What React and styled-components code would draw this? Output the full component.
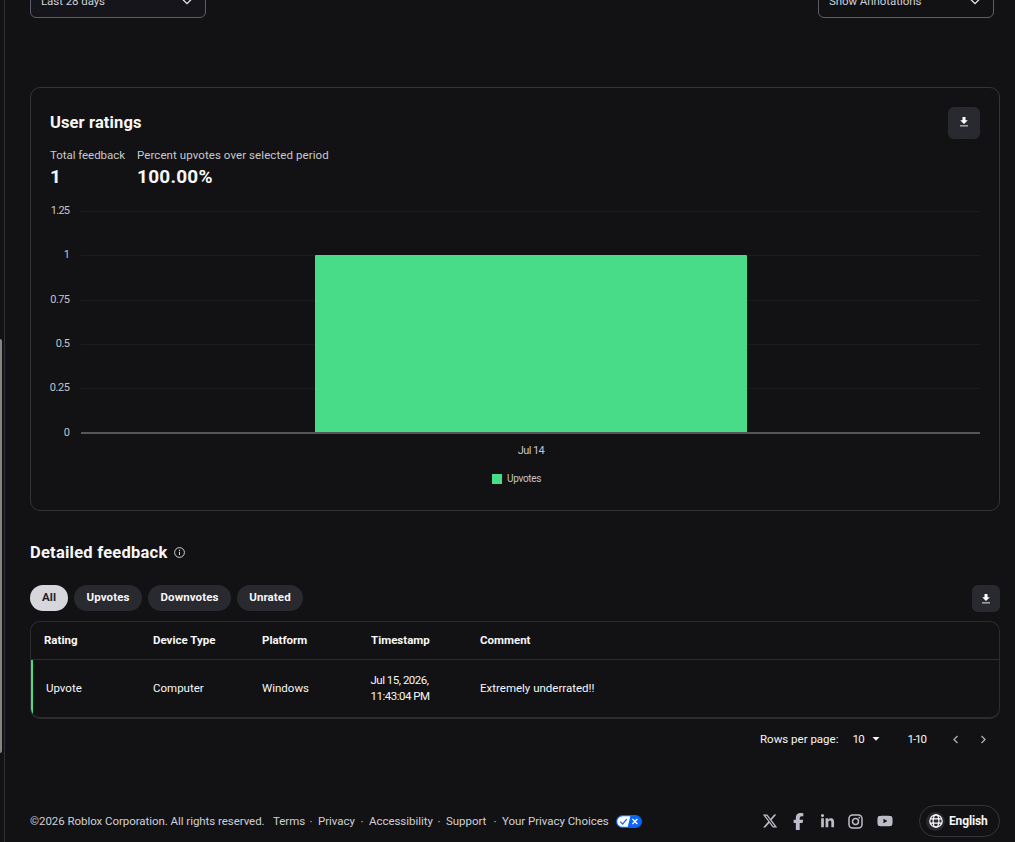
import styled, { createGlobalStyle } from "styled-components";
import { FaXTwitter, FaFacebookF, FaLinkedinIn, FaYoutube } from "react-icons/fa6";

const GlobalStyle = createGlobalStyle`
  * {
    box-sizing: border-box;
  }
  body {
    margin: 0;
    background: #121214;
    color: #f7f7f8;
    font-family: Roboto, "Liberation Sans", sans-serif;
    font-size: 11.5px;
    overflow: hidden;
  }
`;

const Page = styled.div`
  display: flex;
  height: 842px;
  overflow: hidden;
`;

const Rail = styled.div`
  width: 5px;
  flex: none;
  padding-top: 339px;
  border-right: 1px solid #303036;
`;

const Thumb = styled.div`
  width: 2px;
  height: 414px;
  border-radius: 0 2px 2px 0;
  background: #858582;
`;

const Main = styled.main`
  width: 970px;
  margin-left: 25px;
  display: flex;
  flex-direction: column;
`;

const Filters = styled.div`
  display: flex;
  justify-content: space-between;
  align-items: flex-end;
  height: 18px;
  padding-right: 6px;
`;

const Select = styled.button`
  display: flex;
  flex: none;
  align-items: center;
  justify-content: space-between;
  width: 176px;
  height: 34px;
  padding: 0 11px 0 10px;
  border: 1px solid #5d5e69;
  border-radius: 6px;
  background: ${(props) => props.$background || "transparent"};
  color: #d0d1d8;
  font: inherit;
  letter-spacing: -0.07px;
`;

const Card = styled.section`
  height: 424px;
  margin-top: 69px;
  padding: 19px 19px 0;
  border: 1px solid #34353a;
  border-radius: 10px;
`;

const CardHeader = styled.div`
  display: flex;
  justify-content: space-between;
  height: 37px;
`;

const Title = styled.h2`
  margin: 0;
  font-size: 16.5px;
  font-weight: 700;
  line-height: 31px;
  letter-spacing: ${(props) => props.$spacing || "0"};
`;

const DownloadButton = styled.button`
  display: flex;
  align-items: center;
  justify-content: center;
  width: ${(props) => props.$width}px;
  height: ${(props) => props.$height}px;
  padding: 0 0 ${(props) => props.$lift || 0}px;
  border: 0;
  border-radius: 6px;
  background: #292930;
`;

const Stats = styled.div`
  display: flex;
  height: 58px;
`;

const Stat = styled.div`
  width: ${(props) => props.$width};
  white-space: nowrap;
`;

const StatLabel = styled.div`
  color: #c8c9ce;
  line-height: 22px;
  letter-spacing: ${(props) => props.$spacing || "0"};
`;

const StatValue = styled.div`
  font-size: 19px;
  font-weight: 700;
  line-height: 22px;
  letter-spacing: 0.25px;
`;

const Chart = styled.svg`
  display: block;
  overflow: visible;
  font-size: 11px;
  fill: #c3c4ca;
`;

const FeedbackHeader = styled.div`
  display: flex;
  align-items: center;
  gap: 6px;
  margin-top: 26px;
`;

const Toolbar = styled.div`
  display: flex;
  justify-content: space-between;
  margin-top: 17px;
  height: 36px;
`;

const Chips = styled.div`
  display: flex;
  gap: 6px;
`;

const Chip = styled.button`
  width: ${(props) => props.$width}px;
  height: 26px;
  padding: 0 0 2px;
  border: 0;
  border-radius: 13px;
  background: ${(props) => (props.$active ? "#d5d7dd" : "#292930")};
  color: ${(props) => (props.$active ? "#202227" : "#f7f7f8")};
  font: inherit;
  font-weight: 700;
  letter-spacing: 0.1px;
`;

const Table = styled.div`
  height: 98px;
  border: 1px solid #2b2b31;
  border-bottom-width: 2px;
  border-radius: 10px;
  overflow: hidden;
`;

const Row = styled.div`
  display: grid;
  grid-template-columns: repeat(4, 109px) 1fr;
  align-items: center;
  height: 57px;
  padding: 0 0 2px 13px;
  line-height: 16px;
  box-shadow: inset 2px 0 0 #46db87;

  > :first-child {
    padding-left: 2px;
  }
`;

const HeadRow = styled(Row)`
  height: 38px;
  padding-bottom: 1px;
  border-bottom: 1px solid #2b2b31;
  box-shadow: none;
  font-weight: 700;

  > :first-child {
    padding-left: 0;
  }
`;

const Timestamp = styled.span`
  margin-left: -0.5px;
  letter-spacing: -0.5px;
`;

const Pagination = styled.div`
  display: flex;
  align-items: center;
  height: 42px;
  padding: 0 0 2px 730px;
`;

const PageSize = styled.div`
  display: flex;
  align-items: center;
  gap: 8px;
  width: 55px;
  margin-left: 14px;
  letter-spacing: -0.7px;
`;

const Range = styled.div`
  width: 45px;
  letter-spacing: -1px;
`;

const Arrows = styled.div`
  display: flex;
  gap: 21px;
`;

const Footer = styled.footer`
  display: flex;
  align-items: center;
  height: 32px;
  margin-top: 44px;
  color: #cfd0d7;
`;

const Copyright = styled.span`
  width: 243px;
  white-space: nowrap;
  letter-spacing: -0.05px;
`;

const Links = styled.nav`
  display: flex;
  flex: 1;
  align-items: center;
  white-space: nowrap;
`;

const FooterLink = styled.span`
  flex: none;
  width: ${(props) => props.$width}px;
  letter-spacing: -0.04px;
`;

const Dot = styled.span`
  flex: none;
  width: 14px;
  padding-top: 1px;
  text-align: center;
`;

const Socials = styled.div`
  display: flex;
  align-items: center;
  color: #bcbdc8;
`;

const Social = styled.span`
  display: flex;
  justify-content: center;
  width: 28.7px;
`;

const Language = styled.button`
  display: flex;
  align-items: center;
  gap: 4px;
  width: 81px;
  height: 32px;
  margin-left: 20px;
  padding: 0 0 0 6px;
  border: 1px solid #34353c;
  border-radius: 16px;
  background: transparent;
  color: #f7f7f8;
  font: inherit;
  font-size: 12px;
  font-weight: 700;
  letter-spacing: -0.15px;
`;

const GlobeBadge = styled.span`
  display: flex;
  align-items: center;
  justify-content: center;
  width: 19px;
  height: 19px;
  border-radius: 50%;
  background: #292930;
`;

const Chevron = () => (
  <svg width="14" height="8" viewBox="0 0 14 8">
    <path d="M1.500 1.200 7 6.600l5.500-5.400" fill="none" stroke="#e6e7ec" strokeWidth="1.300" />
  </svg>
);

const DownloadIcon = () => (
  <svg width="10" height="12" viewBox="0 0 10 12">
    <path d="M3.500 1h3v3.200h2.300L5 8.100 1.200 4.200h2.300z" fill="#fff" />
    <path d="M1 9.200h8v1.300H1z" fill="#b9bac2" />
  </svg>
);

const InfoIcon = () => (
  <svg width="11" height="11" viewBox="0 0 11 11">
    <circle cx="5.500" cy="5.500" r="4.900" fill="none" stroke="#cfd0d7" />
    <path d="M5 4.700h1v3.400H5zM5 2.700h1v1.200H5z" fill="#cfd0d7" />
  </svg>
);

const PrivacyIcon = () => (
  <svg width="26" height="13" viewBox="0 0 26 13">
    <rect width="26" height="13" rx="6.500" fill="#0b66f5" />
    <path d="M6.500 1.200h7.800L11.800 11.800H6.500a5.300 5.300 0 0 1 0-10.600z" fill="#fff" />
    <path d="m4.300 6.600 2.300 2.500 4.200-5" fill="none" stroke="#0b66f5" strokeWidth="1.300" />
    <path d="m16.400 4 5 5m0-5-5 5" stroke="#fff" strokeWidth="1.300" />
  </svg>
);

const InstagramIcon = () => (
  <svg width="15" height="15" viewBox="0 0 15 15" fill="none" stroke="currentColor" strokeWidth="1.500">
    <rect x="1" y="1" width="13" height="13" rx="3.500" />
    <circle cx="7.500" cy="7.500" r="3" />
    <circle cx="11.300" cy="3.700" r="0.900" fill="currentColor" stroke="none" />
  </svg>
);

const GlobeIcon = () => (
  <svg width="14" height="14" viewBox="0 0 14 14" fill="none" stroke="#fff" strokeWidth="1.200">
    <circle cx="7" cy="7" r="6.200" />
    <ellipse cx="7" cy="7" rx="2.900" ry="6.200" />
    <path d="M1.200 4.900h11.600M1.200 9.100h11.600" />
  </svg>
);

const ArrowIcon = ({ d }) => (
  <svg width="7" height="9" viewBox="0 0 7 9">
    <path d={d} fill="none" stroke="#a9aab0" strokeWidth="1.400" />
  </svg>
);

const ticks = [
  { label: "1.25", y: 9, spacing: -0.75 },
  { label: "1", y: 53.3 },
  { label: "0.75", y: 98, spacing: -0.6 },
  { label: "0.5", y: 142, spacing: -0.5 },
  { label: "0.25", y: 186, spacing: -0.4 },
  { label: "0", y: 231 },
];

const filters = [
  { label: "All", width: 38 },
  { label: "Upvotes", width: 68 },
  { label: "Downvotes", width: 83 },
  { label: "Unrated", width: 66 },
];

const columns = ["Rating", "Device Type", "Platform", "Timestamp", "Comment"];

const RatingsChart = () => (
  <Chart width="930" height="290">
    {ticks.map((tick) => (
      <g key={tick.label}>
        {tick.label !== "0" && (
          <line
            x1="31"
            x2="930"
            y1={Math.round(tick.y) + 0.5}
            y2={Math.round(tick.y) + 0.5}
            stroke="#1c1c1f"
          />
        )}
        <text
          x={20 + (tick.spacing || 0)}
          y={tick.y + 3}
          textAnchor="end"
          letterSpacing={tick.spacing || 0}
        >
          {tick.label}
        </text>
      </g>
    ))}
    <rect x="265" y="53" width="432" height="178" rx="1" fill="#48dc89" />
    <rect x="31" y="230" width="899" height="2" fill="#55565b" />
    <text x="481" y="252" textAnchor="middle" letterSpacing="-0.6">
      Jul 14
    </text>
    <rect x="442" y="272" width="10" height="10" fill="#48dc89" />
    <text x="457" y="280" fontSize="10" letterSpacing="-0.3">
      Upvotes
    </text>
  </Chart>
);

const App = () => {
  return (
    <>
      <GlobalStyle />
      <Page>
        <Rail>
          <Thumb />
        </Rail>
        <Main>
          <Filters>
            <Select $background="#15151b">
              Last 28 days
              <Chevron />
            </Select>
            <Select>
              Show Annotations
              <Chevron />
            </Select>
          </Filters>
          <Card>
            <CardHeader>
              <Title $spacing="0.12px">User ratings</Title>
              <DownloadButton $width={32} $height={32} $lift={3}>
                <DownloadIcon />
              </DownloadButton>
            </CardHeader>
            <Stats>
              <Stat $width="87px">
                <StatLabel $spacing="-0.05px">Total feedback</StatLabel>
                <StatValue>1</StatValue>
              </Stat>
              <Stat>
                <StatLabel $spacing="0.08px">Percent upvotes over selected period</StatLabel>
                <StatValue>100.00%</StatValue>
              </Stat>
            </Stats>
            <RatingsChart />
          </Card>
          <FeedbackHeader>
            <Title $spacing="0.24px">Detailed feedback</Title>
            <InfoIcon />
          </FeedbackHeader>
          <Toolbar>
            <Chips>
              {filters.map((filter, index) => (
                <Chip key={filter.label} $width={filter.width} $active={index === 0}>
                  {filter.label}
                </Chip>
              ))}
            </Chips>
            <DownloadButton $width={28} $height={27}>
              <DownloadIcon />
            </DownloadButton>
          </Toolbar>
          <Table>
            <HeadRow>
              {columns.map((column) => (
                <span key={column}>{column}</span>
              ))}
            </HeadRow>
            <Row>
              <span>Upvote</span>
              <span>Computer</span>
              <span>Windows</span>
              <Timestamp>
                Jul 15, 2026,
                <br />
                11:43:04 PM
              </Timestamp>
              <span>Extremely underrated!!</span>
            </Row>
          </Table>
          <Pagination>
            Rows per page:
            <PageSize>
              10
              <svg width="8" height="4" viewBox="0 0 8 4">
                <path d="M0.500 0h7L4 3.800z" fill="#f7f7f8" />
              </svg>
            </PageSize>
            <Range>1-10</Range>
            <Arrows>
              <ArrowIcon d="M5.500 1 2 4.500 5.500 8" />
              <ArrowIcon d="M1.500 1 5 4.500 1.500 8" />
            </Arrows>
          </Pagination>
          <Footer>
            <Copyright>©2026 Roblox Corporation. All rights reserved.</Copyright>
            <Links>
              <FooterLink $width={31}>Terms</FooterLink>
              <Dot>·</Dot>
              <FooterLink $width={37}>Privacy</FooterLink>
              <Dot>·</Dot>
              <FooterLink $width={63}>Accessibility</FooterLink>
              <Dot>·</Dot>
              <FooterLink $width={42}>Support</FooterLink>
              <Dot>·</Dot>
              <FooterLink $width={114}>Your Privacy Choices</FooterLink>
              <PrivacyIcon />
            </Links>
            <Socials>
              <Social>
                <FaXTwitter size={16} />
              </Social>
              <Social>
                <FaFacebookF size={17} />
              </Social>
              <Social>
                <FaLinkedinIn size={15} />
              </Social>
              <Social>
                <InstagramIcon />
              </Social>
              <Social>
                <FaYoutube size={16} />
              </Social>
            </Socials>
            <Language>
              <GlobeBadge>
                <GlobeIcon />
              </GlobeBadge>
              English
            </Language>
          </Footer>
        </Main>
      </Page>
    </>
  );
};

export default App;
